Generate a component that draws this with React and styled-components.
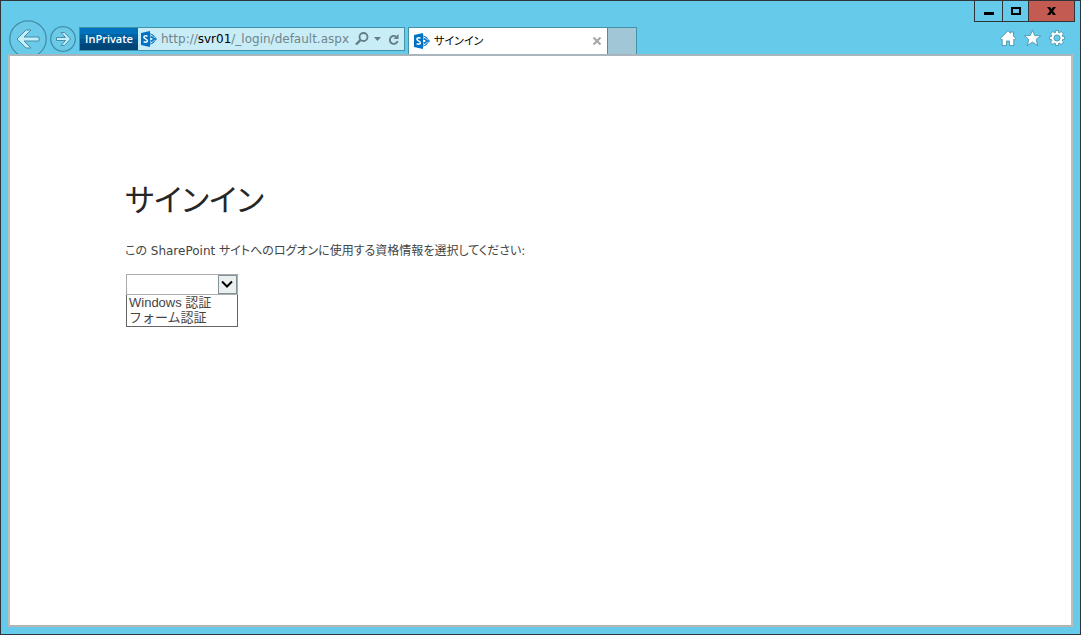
import React, { useState } from "react"
import styled, { createGlobalStyle, css } from "styled-components"

const GlobalStyle = createGlobalStyle`
    * {
        box-sizing: border-box;
    }

    body {
        margin: 0;
        font-family: "Noto Sans", "Noto Sans CJK JP", sans-serif;
        font-size: 13px;
        color: #444;
    }

    button, input, select {
        font: inherit;
        color: inherit;
    }

    svg {
        display: block;
    }
`
const Window = styled.div`
    min-height: 100vh;
    display: flex;
    flex-direction: column;
    padding: 0 5px 7px 7px;
    border: 1px solid #2f3438;
    background: #66caea;
`
const Header = styled.header`
    display: flex;
    height: 53px;
    overflow: hidden;
`
const NavBar = styled.div`
    display: flex;
    flex: 1;
    align-items: flex-start;
    align-self: flex-end;
    height: 34px;
`
const plainButton = css`
    display: block;
    padding: 0;
    border: 0;
    background: none;
`
const NavButton = styled.button`
    ${plainButton}
    margin: ${({ $small }) => ($small ? "6px 3px 0" : "0 0 0 1px")};
`
const AddressBar = styled.div`
    display: flex;
    align-items: center;
    width: 326px;
    height: 24px;
    margin-top: 7px;
    padding-right: 4px;
    border: 1px solid #4292a8;
    background: #c9edf7;
`
const PrivateBadge = styled.span`
    width: 58px;
    margin-right: 3px;
    line-height: 22px;
    text-align: center;
    font-family: "Open Sans", sans-serif;
    font-size: 11px;
    font-weight: 600;
    color: #fff;
    background: linear-gradient(#0072bc 0 6px, #0064a4 6px 11px, #00518a 11px 16px, #004577 16px);
`
const Address = styled.div`
    flex: 1;
    margin-left: 4px;
    line-height: 22px;
    white-space: nowrap;
    font-family: "DejaVu Sans", sans-serif;
    font-size: 12px;
    color: #70858c;

    b {
        font-weight: normal;
        color: #000;
    }
`
const IconButton = styled.button`
    ${plainButton}
    margin-left: ${({ $gap }) => $gap || 0}px;
`
const Tab = styled.div`
    display: flex;
    align-items: center;
    width: 200px;
    height: 27px;
    margin: 7px 0 0 3px;
    padding: 0 5px;
    border: 1px solid #4292a8;
    border-bottom: 0;
    background: #fff;
`
const TabTitle = styled.span`
    flex: 1;
    margin-left: 4px;
    font-size: 11px;
    line-height: 20px;
    font-feature-settings: "palt";
    color: #000;
`
const NewTab = styled.button`
    ${plainButton}
    width: 29px;
    height: 27px;
    margin-top: 7px;
    border: 1px solid #4292a8;
    border-width: 1px 1px 0 0;
    background: #a1c7d6;
`
const HeaderSide = styled.div`
    display: flex;
    flex-direction: column;
    align-items: flex-end;
`
const CaptionButtons = styled.div`
    display: flex;
    height: 21px;
    border: 1px solid #2f3438;
    border-top: 0;
`
const CaptionButton = styled.button`
    ${plainButton}
    display: grid;
    place-items: center;
    width: ${({ $width }) => $width}px;
    background: ${({ $close }) => ($close ? "#c35b52" : "none")};

    & + & {
        border-left: 1px solid #2f3438;
    }
`
const Tools = styled.div`
    display: flex;
    gap: 8px;
    margin: 8px 10px 0 0;
`
const Page = styled.main`
    flex: 1;
    margin-right: 2px;
    padding: 118px 115px 40px;
    border: 2px solid #bdbebf;
    border-top-color: #a9b5bc;
    border-bottom-color: #b4b4b4;
    background: #fff;
`
const Title = styled.h1`
    margin: 0;
    font-size: 31px;
    font-weight: normal;
    line-height: 48px;
    font-family: "Noto Sans CJK JP", sans-serif;
    font-feature-settings: "palt";
    color: #262626;
`
const Prompt = styled.label`
    display: block;
    margin: 19px 0 13px;
    line-height: 20px;
    font-family: "DejaVu Sans", "Noto Sans CJK JP", sans-serif;
    font-size: 12px;
    font-feature-settings: "palt";
`
const Picker = styled.div`
    width: 112px;
    margin-left: 1px;
    font-family: "Liberation Sans", "Noto Sans CJK JP", sans-serif;
    font-size: 13px;
`
const SelectBox = styled.div`
    display: flex;
    height: 21px;
    border: 1px solid #ababab;
`
const Select = styled.select`
    appearance: none;
    flex: 1;
    min-width: 0;
    padding: 0 2px;
    border: 0;
    outline: 0;
    background: #fff;
`
const SelectArrow = styled.span`
    display: grid;
    place-items: center;
    width: 19px;
    border: 1px solid #7f9297;
    background: #eceff0;
`
const Options = styled.ul`
    margin: 0;
    padding: 0 2px 1px;
    list-style: none;
    border: 1px solid #646464;
    border-top: 0;
`
const Option = styled.li`
    height: 15px;
    line-height: 15px;
    white-space: nowrap;
    cursor: default;
`

const BackIcon = () => (
    <svg width="38" height="38" viewBox="0 0 38 38">
        <circle cx="19" cy="19" r="18.2" fill="#6bcae7" stroke="#438fa8" strokeWidth="1.3" />
        <path
            d="M8 19l9-9h5l-7 7h15v4H15l7 7h-5Z"
            fill="#c3eefa"
            stroke="#438fa8"
            strokeLinejoin="round"
        />
    </svg>
)

const ForwardIcon = () => (
    <svg width="26" height="26" viewBox="0 0 26 26">
        <circle cx="13" cy="13" r="12.3" fill="#6bcae7" stroke="#438fa8" strokeWidth="1.3" />
        <path
            d="M20.5 13l-6-6.5H11l4.500 5h-9v3h9l-4.500 5h3.500Z"
            fill="#c3eefa"
            stroke="#438fa8"
            strokeLinejoin="round"
        />
    </svg>
)

const SharePointIcon = () => (
    <svg width="16" height="16" viewBox="0 0 16 16">
        <path
            d="M9 2.8 12 4l3.300 4L12 12l-3 1.200M9.500 4.500 12.800 8l-3.300 3.500M12 4v8M9 6l6.300 2L9 10"
            fill="none"
            stroke="#0072c6"
            strokeWidth=".9"
        />
        <path d="M0 2 9 0v16l-9-2Z" fill="#0072c6" />
        <path
            d="M6.500 5.300C4.300 4.300 2.800 5 2.900 6.300c.1 1.700 3.500 1.500 3.500 3.400 0 1.500-2 1.900-3.800 1"
            fill="none"
            stroke="#fff"
            strokeWidth="1.5"
        />
    </svg>
)

const SearchIcon = () => (
    <svg width="14" height="14" viewBox="0 0 14 14" fill="none" stroke="#657d85">
        <circle cx="8.5" cy="5" r="4" strokeWidth="1.8" />
        <path d="M5.500 8 1 12.500" strokeWidth="2.4" />
    </svg>
)

const ArrowDownIcon = () => (
    <svg width="7" height="4" viewBox="0 0 7 4">
        <path d="M0 0h7L3.500 4Z" fill="#657d85" />
    </svg>
)

const RefreshIcon = () => (
    <svg width="12" height="13" viewBox="0 0 12 13">
        <path d="M8 3.500A4 4 0 1 0 9.700 8" fill="none" stroke="#657d85" strokeWidth="1.9" />
        <path d="M10.500 1v5H5.500Z" fill="#657d85" />
    </svg>
)

const CloseIcon = () => (
    <svg width="10" height="10" viewBox="0 0 10 10">
        <path d="m1.500 1.500 7 7m0-7-7 7" stroke="#a8a8a8" strokeWidth="2.2" />
    </svg>
)

const MinimizeIcon = () => (
    <svg width="10" height="10" viewBox="0 0 10 10">
        <path d="M0 6h10v3H0Z" />
    </svg>
)

const MaximizeIcon = () => (
    <svg width="10" height="8" viewBox="0 0 10 8">
        <path d="M1 1h8v6H1Z" fill="none" stroke="#000" strokeWidth="2" />
    </svg>
)

const CloseWindowIcon = () => (
    <svg width="9" height="8" viewBox="0 0 9 8">
        <path d="M0 0h3l1.500 2L6 0h3L6 4l3 4H6L4.500 6 3 8H0l3-4Z" />
    </svg>
)

const HomeIcon = () => (
    <svg width="16" height="16" viewBox="0 0 16 16">
        <path
            d="M8 .8 10.500 3.200V2h3v4.200l2.200 2.200-1.200 1.400-.7-.6v6.300H9.500v-4.500h-3v4.500H2.200V9.200l-.7.6L.3 8.400Z"
            fill="#fff"
            stroke="#3f8ca5"
            strokeWidth=".8"
        />
    </svg>
)

const StarIcon = () => (
    <svg width="17" height="16" viewBox="0 0 17 16">
        <path
            d="m8.500.3 2.200 5.300 6 .1-4.600 3.800 1.700 6.100-5.300-3.500-5.300 3.500 1.700-6.100L.3 5.700l6-.1Z"
            fill="#fff"
            stroke="#3f8ca5"
            strokeWidth=".8"
        />
    </svg>
)

const GearIcon = () => (
    <svg width="16" height="16" viewBox="0 0 16 16">
        <path
            d="M6.600.4h2.800v2l1.300.5L12 1.400 14.600 4 13.100 5.300l.5 1.300h2v2.800h-2l-.5 1.300 1.500 1.300-2.600 2.600-1.300-1.500-1.300.5v2H6.600v-2l-1.300-.5L4 14.600 1.400 12l1.500-1.300-.5-1.300h-2V6.600h2l.5-1.300L1.400 4 4 1.400l1.300 1.500 1.300-.5Z"
            fill="#fff"
            stroke="#3f8ca5"
            strokeWidth=".8"
        />
        <circle cx="8" cy="8" r="3.1" fill="#66caea" stroke="#3f8ca5" strokeWidth=".8" />
    </svg>
)

const ChevronIcon = () => (
    <svg width="13" height="9" viewBox="0 0 13 9">
        <path d="m1 1.500 5 5 5-5" fill="none" stroke="#000" strokeWidth="2" />
    </svg>
)

const methods = ["Windows 認証", "フォーム認証"]

const App = () => {
    const [method, setMethod] = useState("")

    return (
        <Window>
            <GlobalStyle />
            <Header>
                <NavBar>
                    <NavButton aria-label="戻る"><BackIcon /></NavButton>
                    <NavButton $small aria-label="進む"><ForwardIcon /></NavButton>
                    <AddressBar>
                        <PrivateBadge>InPrivate</PrivateBadge>
                        <SharePointIcon />
                        <Address>http://<b>svr01</b>/_login/default.aspx</Address>
                        <IconButton aria-label="検索"><SearchIcon /></IconButton>
                        <IconButton $gap={5} aria-label="履歴"><ArrowDownIcon /></IconButton>
                        <IconButton $gap={7} aria-label="更新"><RefreshIcon /></IconButton>
                    </AddressBar>
                    <Tab>
                        <SharePointIcon />
                        <TabTitle>サインイン</TabTitle>
                        <IconButton aria-label="タブを閉じる"><CloseIcon /></IconButton>
                    </Tab>
                    <NewTab aria-label="新しいタブ" />
                </NavBar>
                <HeaderSide>
                    <CaptionButtons>
                        <CaptionButton $width={27} aria-label="最小化"><MinimizeIcon /></CaptionButton>
                        <CaptionButton $width={26} aria-label="最大化"><MaximizeIcon /></CaptionButton>
                        <CaptionButton $width={46} $close aria-label="閉じる"><CloseWindowIcon /></CaptionButton>
                    </CaptionButtons>
                    <Tools>
                        <IconButton aria-label="ホーム"><HomeIcon /></IconButton>
                        <IconButton aria-label="お気に入り"><StarIcon /></IconButton>
                        <IconButton aria-label="ツール"><GearIcon /></IconButton>
                    </Tools>
                </HeaderSide>
            </Header>
            <Page>
                <Title>サインイン</Title>
                <Prompt htmlFor="method">
                    この SharePoint サイトへのログオンに使用する資格情報を選択してください:
                </Prompt>
                <Picker>
                    <SelectBox>
                        <Select id="method" value={method} onChange={e => setMethod(e.target.value)}>
                            <option value="" />
                            {methods.map(name => <option key={name}>{name}</option>)}
                        </Select>
                        <SelectArrow><ChevronIcon /></SelectArrow>
                    </SelectBox>
                    <Options role="listbox" aria-label="認証方法">
                        {methods.map(name => (
                            <Option
                                key={name}
                                role="option"
                                aria-selected={name === method}
                                onClick={() => setMethod(name)}
                            >
                                {name}
                            </Option>
                        ))}
                    </Options>
                </Picker>
            </Page>
        </Window>
    )
}

export default App
